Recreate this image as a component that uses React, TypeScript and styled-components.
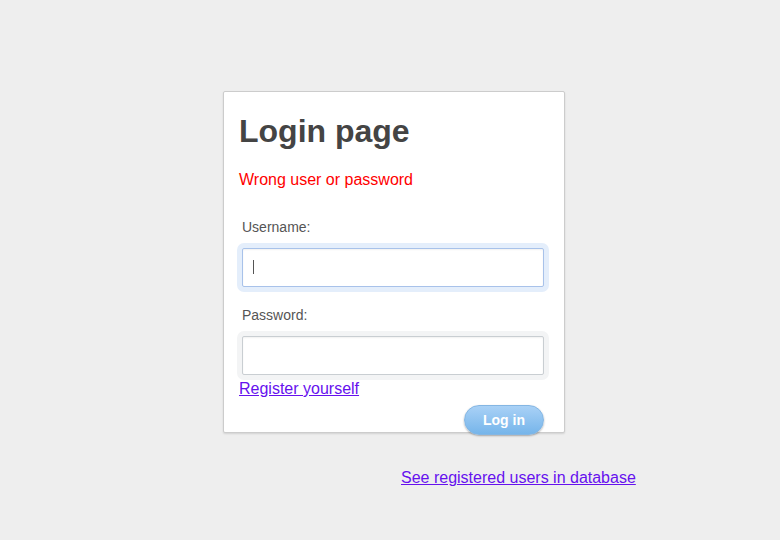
import styled, { createGlobalStyle } from 'styled-components';

const GlobalStyle = createGlobalStyle`
  html, body {
    margin: 0;
    padding: 0;
    background: #eeeeee;
    font-family: 'Liberation Sans', Arial, sans-serif;
  }
`;

const Page = styled.div`
  width: 780px;
  height: 540px;
  padding-top: 91px;
  box-sizing: border-box;
`;

const Card = styled.div`
  margin-left: 223px;
  width: 342px;
  height: 342px;
  box-sizing: border-box;
  padding: 0 15px;
  background: #fff;
  border: 1px solid #cccccc;
  border-radius: 2px;
  box-shadow: 0 1px 2px rgba(0, 0, 0, 0.12);
`;

const Title = styled.h1`
  margin: 21px 0 0;
  font-size: 32px;
  line-height: 36px;
  font-weight: bold;
  color: #444444;
`;

const ErrorText = styled.p`
  margin: 22px 0 0;
  font-size: 16px;
  line-height: 18px;
  color: #ff0000;
`;

const Form = styled.form`
  display: flex;
  flex-direction: column;
  margin-top: 30px;
`;

const Label = styled.label<{ $gap?: number }>`
  margin-top: ${(p) => p.$gap ?? 0}px;
  padding-left: 3px;
  font-size: 14px;
  line-height: 16px;
  color: #555555;
`;

const Field = styled.div<{ $focused?: boolean }>`
  position: relative;
  margin: 8px 0 0 -2px;
  width: 312px;
  height: 49px;
  box-sizing: border-box;
  padding: 5px;
  border-radius: 7px;
  background: ${(p) => (p.$focused ? '#e4eefb' : '#f3f4f5')};

  ${(p) =>
    p.$focused &&
    `
    &::after {
      content: '';
      position: absolute;
      left: 16px;
      top: 17px;
      width: 1px;
      height: 14px;
      background: #555;
    }
  `}
`;

const Input = styled.input<{ $focused?: boolean }>`
  display: block;
  width: 100%;
  height: 39px;
  box-sizing: border-box;
  margin: 0;
  border: 1px solid ${(p) => (p.$focused ? '#a8c2ea' : '#c9ced2')};
  border-radius: 2px;
  background: #fff;
  box-shadow: inset 0 1px 2px rgba(0, 0, 0, 0.06);
  outline: none;
  font-size: 14px;
  font-family: 'Liberation Sans', Arial, sans-serif;
`;

const Link = styled.a`
  font-size: 16px;
  line-height: 16px;
  color: #6611ee;
  text-decoration: underline;
`;

const Actions = styled.div`
  display: flex;
  justify-content: flex-end;
  padding-right: 5px;
  margin-top: 7px;
`;

const Button = styled.button`
  width: 80px;
  height: 30px;
  box-sizing: border-box;
  border: 1px solid #84b6e3;
  border-radius: 15px;
  background: linear-gradient(#a9d1f6, #76b5ea);
  box-shadow: 0 1px 2px rgba(0, 0, 0, 0.3);
  color: #ffffff;
  font-family: 'Liberation Sans', Arial, sans-serif;
  font-size: 14px;
  font-weight: bold;
  padding: 0;
`;

const Footer = styled.div`
  margin: 37px 0 0 401px;
  line-height: 16px;
`;

export default function App() {
  return (
    <Page>
      <GlobalStyle />
      <Card>
        <Title>Login page</Title>
        <ErrorText>Wrong user or password</ErrorText>
        <Form onSubmit={(e) => e.preventDefault()}>
          <Label>Username:</Label>
          <Field $focused>
            <Input $focused type="text" />
          </Field>
          <Label $gap={15}>Password:</Label>
          <Field>
            <Input type="password" />
          </Field>
          <div>
            <Link href="#">Register yourself</Link>
          </div>
          <Actions>
            <Button type="submit">Log in</Button>
          </Actions>
        </Form>
      </Card>
      <Footer>
        <Link href="#">See registered users in database</Link>
      </Footer>
    </Page>
  );
}
